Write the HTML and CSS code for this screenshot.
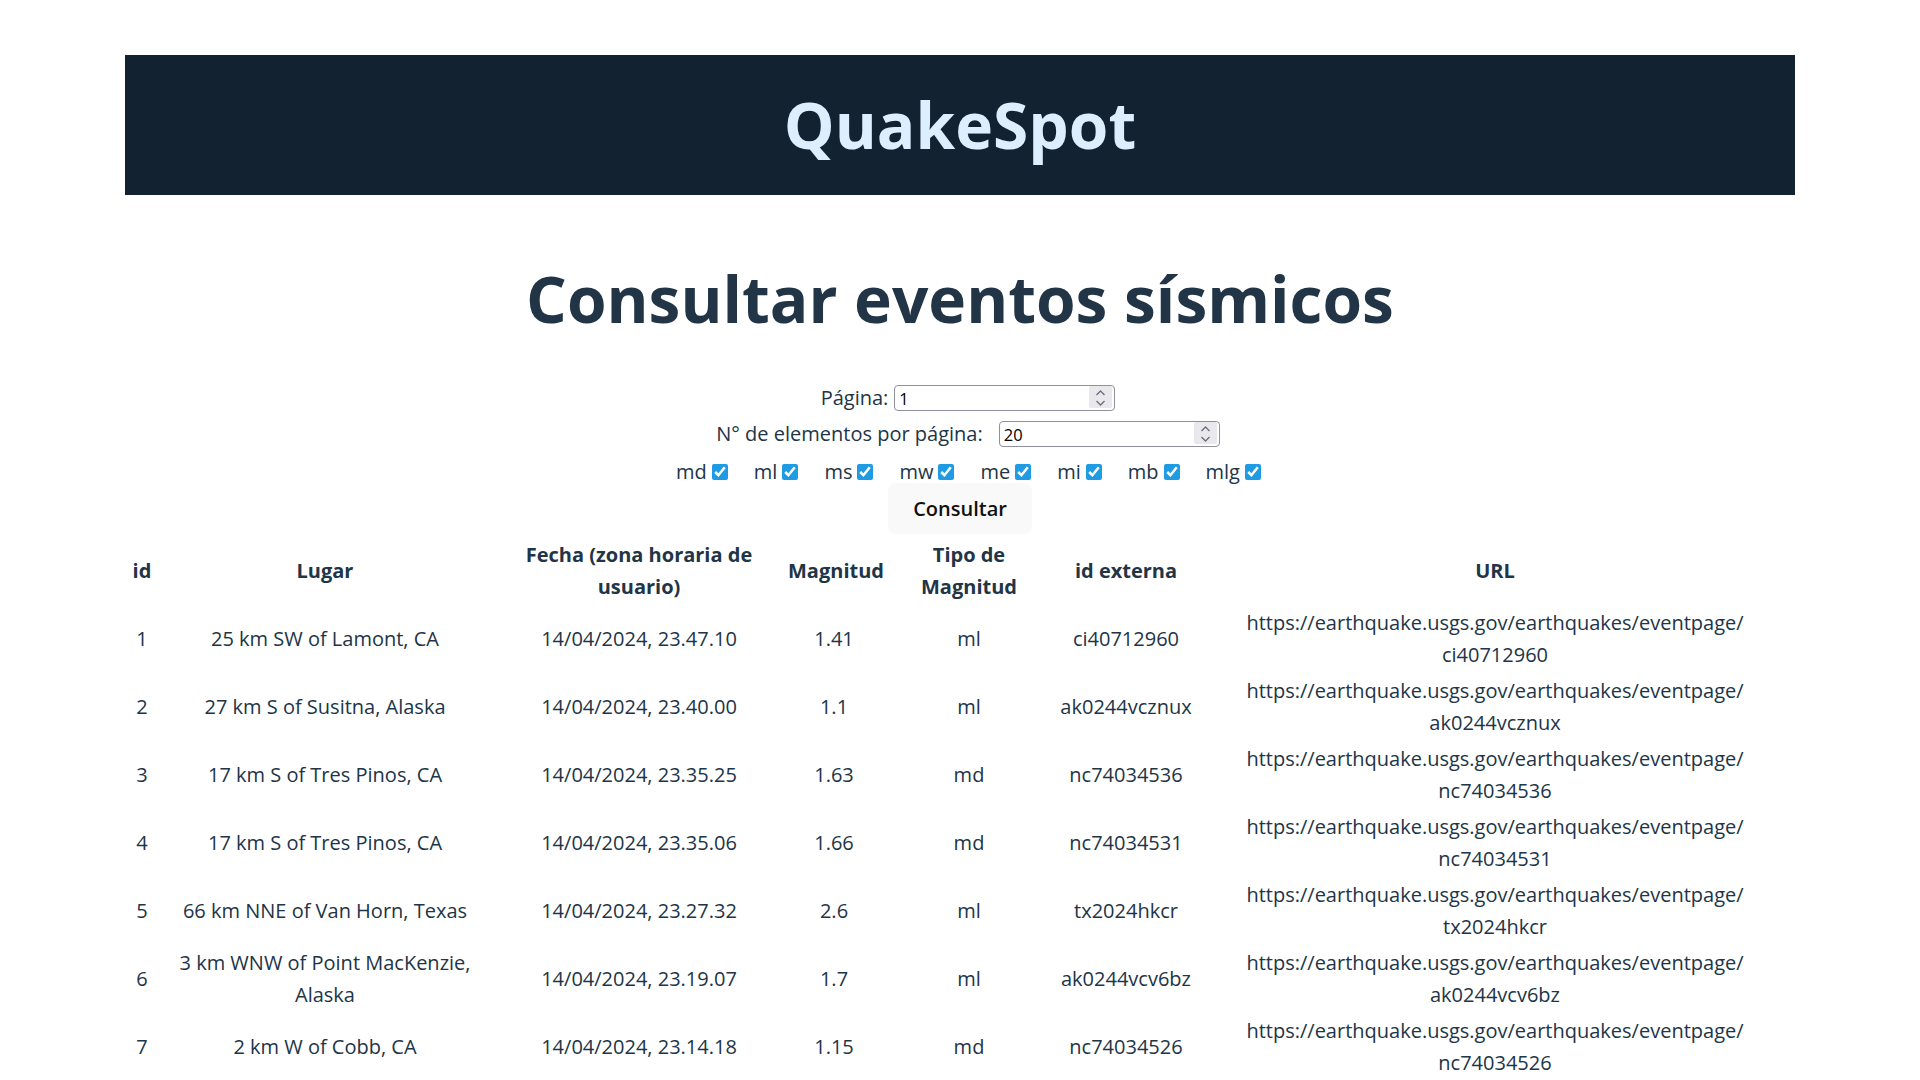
FILE: index.html
```html
<!DOCTYPE html>
<html lang="es">
<head>
<meta charset="utf-8">
<title>QuakeSpot</title>
<link rel="stylesheet" href="styles.css">
</head>
<body>
<div class="app">
  <header class="topbar">
    <div class="brand">QuakeSpot</div>
  </header>

  <h1 class="title">Consultar eventos sísmicos</h1>

  <form class="query">
    <div class="field">
      <label for="pagina">Página:</label>
      <span class="spin-wrap">
        <input id="pagina" class="num" type="number" value="1">
        <span class="spinner" aria-hidden="true"><svg width="23" height="22" viewBox="0 0 23 22"><path d="M7.5 9 L11.5 5 L15.5 9 M7.5 15 L11.5 19 L15.5 15" fill="none" stroke="#6f6f7b" stroke-width="1.4"/></svg></span>
      </span>
    </div>
    <div class="field field-wide">
      <label for="elementos">N° de elementos por página:</label>
      <span class="spin-wrap">
        <input id="elementos" class="num" type="number" value="20">
        <span class="spinner" aria-hidden="true"><svg width="23" height="22" viewBox="0 0 23 22"><path d="M7.5 9 L11.5 5 L15.5 9 M7.5 15 L11.5 19 L15.5 15" fill="none" stroke="#6f6f7b" stroke-width="1.4"/></svg></span>
      </span>
    </div>
    <div class="checks">
      <label class="check">md<input type="checkbox" checked></label>
      <label class="check">ml<input type="checkbox" checked></label>
      <label class="check">ms<input type="checkbox" checked></label>
      <label class="check">mw<input type="checkbox" checked></label>
      <label class="check">me<input type="checkbox" checked></label>
      <label class="check">mi<input type="checkbox" checked></label>
      <label class="check">mb<input type="checkbox" checked></label>
      <label class="check">mlg<input type="checkbox" checked></label>
    </div>
    <button type="button" class="btn">Consultar</button>
  </form>

  <table class="events">
    <colgroup>
      <col class="c-id"><col class="c-place"><col class="c-date"><col class="c-mag"><col class="c-type"><col class="c-ext"><col class="c-url">
    </colgroup>
    <thead>
      <tr>
        <th>id</th>
        <th class="place">Lugar</th>
        <th class="date">Fecha (zona horaria de usuario)</th>
        <th>Magnitud</th>
        <th class="type">Tipo de Magnitud</th>
        <th>id externa</th>
        <th class="url">URL</th>
      </tr>
    </thead>
    <tbody>
      <tr><td>1</td><td class="place">25 km SW of Lamont, CA</td><td>14/04/2024, 23.47.10</td><td>1.41</td><td>ml</td><td>ci40712960</td><td class="url">https://earthquake.usgs.gov/earthquakes/eventpage/<wbr>ci40712960</td></tr>
      <tr><td>2</td><td class="place">27 km S of Susitna, Alaska</td><td>14/04/2024, 23.40.00</td><td>1.1</td><td>ml</td><td>ak0244vcznux</td><td class="url">https://earthquake.usgs.gov/earthquakes/eventpage/<wbr>ak0244vcznux</td></tr>
      <tr><td>3</td><td class="place">17 km S of Tres Pinos, CA</td><td>14/04/2024, 23.35.25</td><td>1.63</td><td>md</td><td>nc74034536</td><td class="url">https://earthquake.usgs.gov/earthquakes/eventpage/<wbr>nc74034536</td></tr>
      <tr><td>4</td><td class="place">17 km S of Tres Pinos, CA</td><td>14/04/2024, 23.35.06</td><td>1.66</td><td>md</td><td>nc74034531</td><td class="url">https://earthquake.usgs.gov/earthquakes/eventpage/<wbr>nc74034531</td></tr>
      <tr><td>5</td><td class="place">66 km NNE of Van Horn, Texas</td><td>14/04/2024, 23.27.32</td><td>2.6</td><td>ml</td><td>tx2024hkcr</td><td class="url">https://earthquake.usgs.gov/earthquakes/eventpage/<wbr>tx2024hkcr</td></tr>
      <tr><td>6</td><td class="place">3 km WNW of Point MacKenzie, Alaska</td><td>14/04/2024, 23.19.07</td><td>1.7</td><td>ml</td><td>ak0244vcv6bz</td><td class="url">https://earthquake.usgs.gov/earthquakes/eventpage/<wbr>ak0244vcv6bz</td></tr>
      <tr><td>7</td><td class="place">2 km W of Cobb, CA</td><td>14/04/2024, 23.14.18</td><td>1.15</td><td>md</td><td>nc74034526</td><td class="url">https://earthquake.usgs.gov/earthquakes/eventpage/<wbr>nc74034526</td></tr>
      <tr><td>8</td><td class="place">8 km NW of The Geysers, CA</td><td>14/04/2024, 23.05.41</td><td>0.98</td><td>md</td><td>nc74034521</td><td class="url">https://earthquake.usgs.gov/earthquakes/eventpage/<wbr>nc74034521</td></tr>
      <tr><td>9</td><td class="place">45 km SE of Chignik, Alaska</td><td>14/04/2024, 22.58.12</td><td>2.3</td><td>ml</td><td>ak0244vcq1xd</td><td class="url">https://earthquake.usgs.gov/earthquakes/eventpage/<wbr>ak0244vcq1xd</td></tr>
      <tr><td>10</td><td class="place">6 km NE of Aguanga, CA</td><td>14/04/2024, 22.51.03</td><td>0.87</td><td>ml</td><td>ci40712944</td><td class="url">https://earthquake.usgs.gov/earthquakes/eventpage/<wbr>ci40712944</td></tr>
      <tr><td>11</td><td class="place">12 km SSW of Volcano, Hawaii</td><td>14/04/2024, 22.44.29</td><td>2.05</td><td>md</td><td>hv74193312</td><td class="url">https://earthquake.usgs.gov/earthquakes/eventpage/<wbr>hv74193312</td></tr>
      <tr><td>12</td><td class="place">21 km N of Yucca Valley, CA</td><td>14/04/2024, 22.38.50</td><td>1.02</td><td>ml</td><td>ci40712936</td><td class="url">https://earthquake.usgs.gov/earthquakes/eventpage/<wbr>ci40712936</td></tr>
      <tr><td>13</td><td class="place">31 km W of Stanley, Idaho</td><td>14/04/2024, 22.30.15</td><td>1.9</td><td>ml</td><td>mb90031257</td><td class="url">https://earthquake.usgs.gov/earthquakes/eventpage/<wbr>mb90031257</td></tr>
      <tr><td>14</td><td class="place">5 km ESE of Anza, CA</td><td>14/04/2024, 22.21.47</td><td>0.76</td><td>ml</td><td>ci40712928</td><td class="url">https://earthquake.usgs.gov/earthquakes/eventpage/<wbr>ci40712928</td></tr>
      <tr><td>15</td><td class="place">58 km NW of Talkeetna, Alaska</td><td>14/04/2024, 22.15.08</td><td>1.4</td><td>ml</td><td>ak0244vcn7s2</td><td class="url">https://earthquake.usgs.gov/earthquakes/eventpage/<wbr>ak0244vcn7s2</td></tr>
      <tr><td>16</td><td class="place">3 km N of Petrolia, CA</td><td>14/04/2024, 22.09.33</td><td>1.58</td><td>md</td><td>nc74034511</td><td class="url">https://earthquake.usgs.gov/earthquakes/eventpage/<wbr>nc74034511</td></tr>
      <tr><td>17</td><td class="place">14 km SE of Mentone, Texas</td><td>14/04/2024, 22.01.56</td><td>2.1</td><td>ml</td><td>tx2024hkbq</td><td class="url">https://earthquake.usgs.gov/earthquakes/eventpage/<wbr>tx2024hkbq</td></tr>
      <tr><td>18</td><td class="place">9 km SW of Idyllwild, CA</td><td>14/04/2024, 21.54.20</td><td>0.92</td><td>ml</td><td>ci40712912</td><td class="url">https://earthquake.usgs.gov/earthquakes/eventpage/<wbr>ci40712912</td></tr>
      <tr><td>19</td><td class="place">37 km E of Cantwell, Alaska</td><td>14/04/2024, 21.47.02</td><td>1.3</td><td>ml</td><td>ak0244vcj5wp</td><td class="url">https://earthquake.usgs.gov/earthquakes/eventpage/<wbr>ak0244vcj5wp</td></tr>
      <tr><td>20</td><td class="place">4 km NNW of Pinnacles, CA</td><td>14/04/2024, 21.39.44</td><td>1.21</td><td>md</td><td>nc74034506</td><td class="url">https://earthquake.usgs.gov/earthquakes/eventpage/<wbr>nc74034506</td></tr>
    </tbody>
  </table>
</div>
</body>
</html>
```

FILE: styles.css
```css
html, body {
  margin: 0;
  padding: 0;
  background: #ffffff;
}

::-webkit-scrollbar {
  width: 5px;
}
::-webkit-scrollbar-track {
  background: #ffffff;
}
::-webkit-scrollbar-thumb {
  background: #a9a9a9;
}

body {
  font-family: "Open Sans", "Liberation Sans", sans-serif;
  font-size: 20px;
  line-height: 1.6;
  color: #213547;
}

.app {
  max-width: 1670px;
  margin: 0 auto;
  padding: 55px 0 510px;
}

.topbar {
  height: 140px;
  background: #132231;
  display: flex;
  align-items: center;
  justify-content: center;
}

.brand {
  font-size: 64px;
  font-weight: 700;
  line-height: 1.1;
  color: #ddeeff;
}

.title {
  margin: 69px 0 0;
  font-size: 64px;
  font-weight: 700;
  line-height: 1.1;
  text-align: center;
  color: #213547;
}

.query {
  margin-top: 51px;
  display: flex;
  flex-direction: column;
  align-items: center;
}

.field {
  display: flex;
  align-items: center;
  justify-content: center;
  gap: 6px;
  height: 26px;
  padding-left: 16px;
}

.field-wide {
  margin-top: 10px;
  gap: 16px;
}

.spin-wrap {
  position: relative;
  display: inline-flex;
}

.num {
  box-sizing: border-box;
  width: 221px;
  height: 26px;
  margin: 0;
  padding: 1px 30px 1px 4px;
  font-family: "Open Sans", "Liberation Sans", sans-serif;
  font-size: 16.5px;
  color: #000000;
  border: 1px solid #8f8f9d;
  border-radius: 4px;
  background: #ffffff;
  -moz-appearance: textfield;
}

.num::-webkit-inner-spin-button,
.num::-webkit-outer-spin-button {
  -webkit-appearance: none;
  margin: 0;
}

.spinner {
  position: absolute;
  top: 1px;
  right: 3px;
  width: 23px;
  height: 22px;
  background: #e9e9ed;
  border-radius: 2px;
  display: flex;
  pointer-events: none;
}

.checks {
  margin-top: 14px;
  height: 22px;
  display: flex;
  align-items: center;
  gap: 26px;
  padding-left: 17px;
}

.check {
  display: flex;
  align-items: center;
}

.check input {
  width: 16px;
  height: 16px;
  margin: 0 0 0 5px;
  accent-color: #1f9be3;
}

.btn {
  box-sizing: border-box;
  height: 51px;
  padding: 0 24px;
  border: 1px solid transparent;
  border-radius: 8px;
  background: #f9f9f9;
  color: #111111;
  font-family: "Open Sans", "Liberation Sans", sans-serif;
  font-size: 20px;
  font-weight: 600;
}

.events {
  width: 100%;
  margin-top: 2px;
  table-layout: fixed;
  border-spacing: 2px;
}

.c-id { width: 30px; }
.c-place { width: 332px; }
.c-date { width: 292px; }
.c-mag { width: 94px; }
.c-type { width: 172px; }
.c-ext { width: 138px; }
.c-url { width: 596px; }

.events th,
.events td {
  padding: 1px;
  text-align: center;
  vertical-align: middle;
  white-space: normal;
}

.events th {
  font-weight: 700;
}

.events th.date {
  padding: 1px 20px;
}

.events th.type {
  padding: 1px 20px;
}

.events .place {
  padding: 1px 10px;
}

.events .url {
  padding: 1px 28px;
}
```
